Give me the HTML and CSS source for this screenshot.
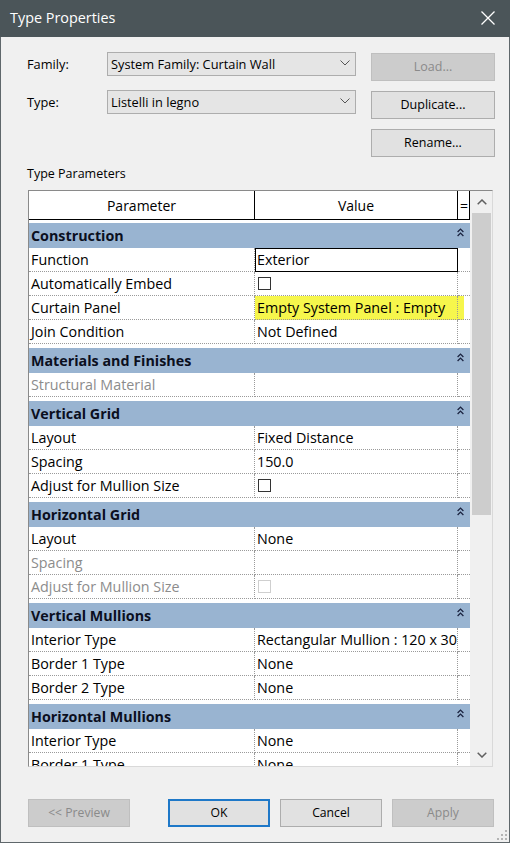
FILE: index.html
```html
<!DOCTYPE html>
<html>
<head>
<meta charset="utf-8">
<title>Type Properties</title>
<link rel="stylesheet" href="styles.css">
</head>
<body>
<div class="window">
  <div class="titlebar">
    <span class="title">Type Properties</span>
    <svg class="close" width="14" height="14" viewBox="0 0 14 14"><path d="M0.5 0.5 L13.5 13.5 M13.5 0.5 L0.5 13.5" stroke="#ffffff" stroke-width="1.3" fill="none"/></svg>
  </div>
  <div class="content">
    <div class="top">
      <div class="fields">
        <div class="field">
          <span class="label">Family:</span>
          <div class="combo"><span>System Family: Curtain Wall</span><svg width="10" height="6" viewBox="0 0 10 6"><path d="M0.5 0.5 L5 5 L9.5 0.5" stroke="#555" stroke-width="1" fill="none"/></svg></div>
        </div>
        <div class="field">
          <span class="label">Type:</span>
          <div class="combo"><span>Listelli in legno</span><svg width="10" height="6" viewBox="0 0 10 6"><path d="M0.5 0.5 L5 5 L9.5 0.5" stroke="#555" stroke-width="1" fill="none"/></svg></div>
        </div>
      </div>
      <div class="side-buttons">
        <button class="btn disabled">Load...</button>
        <button class="btn">Duplicate...</button>
        <button class="btn">Rename...</button>
      </div>
    </div>
    <div class="section-label">Type Parameters</div>
    <div class="grid">
      <div class="table">
        <div class="thead">
          <div class="th p">Parameter</div>
          <div class="th v">Value</div>
          <div class="th e">=</div>
        </div>

        <div class="group first">
          <div class="band"><span>Construction</span><svg width="7" height="9" viewBox="0 0 7 9"><path d="M0.6 4 L3.5 1.1 L6.4 4 M0.6 8 L3.5 5.1 L6.4 8" stroke="#1b2340" stroke-width="1.3" fill="none"/></svg></div>
          <div class="row"><div class="cell p">Function</div><div class="cell v edit">Exterior</div><div class="cell e"></div></div>
          <div class="row"><div class="cell p">Automatically Embed</div><div class="cell v"><span class="check"></span></div><div class="cell e"></div></div>
          <div class="row hl"><div class="cell p">Curtain Panel</div><div class="cell v">Empty System Panel : Empty</div><div class="cell e"></div></div>
          <div class="row"><div class="cell p">Join Condition</div><div class="cell v">Not Defined</div><div class="cell e"></div></div>
        </div>

        <div class="group">
          <div class="band"><span>Materials and Finishes</span><svg width="7" height="9" viewBox="0 0 7 9"><path d="M0.6 4 L3.5 1.1 L6.4 4 M0.6 8 L3.5 5.1 L6.4 8" stroke="#1b2340" stroke-width="1.3" fill="none"/></svg></div>
          <div class="row"><div class="cell p muted">Structural Material</div><div class="cell v"></div><div class="cell e"></div></div>
        </div>

        <div class="group">
          <div class="band"><span>Vertical Grid</span><svg width="7" height="9" viewBox="0 0 7 9"><path d="M0.6 4 L3.5 1.1 L6.4 4 M0.6 8 L3.5 5.1 L6.4 8" stroke="#1b2340" stroke-width="1.3" fill="none"/></svg></div>
          <div class="row"><div class="cell p">Layout</div><div class="cell v">Fixed Distance</div><div class="cell e"></div></div>
          <div class="row"><div class="cell p">Spacing</div><div class="cell v">150.0</div><div class="cell e"></div></div>
          <div class="row"><div class="cell p">Adjust for Mullion Size</div><div class="cell v"><span class="check"></span></div><div class="cell e"></div></div>
        </div>

        <div class="group">
          <div class="band"><span>Horizontal Grid</span><svg width="7" height="9" viewBox="0 0 7 9"><path d="M0.6 4 L3.5 1.1 L6.4 4 M0.6 8 L3.5 5.1 L6.4 8" stroke="#1b2340" stroke-width="1.3" fill="none"/></svg></div>
          <div class="row"><div class="cell p">Layout</div><div class="cell v">None</div><div class="cell e"></div></div>
          <div class="row"><div class="cell p muted">Spacing</div><div class="cell v"></div><div class="cell e"></div></div>
          <div class="row"><div class="cell p muted">Adjust for Mullion Size</div><div class="cell v"><span class="check off"></span></div><div class="cell e"></div></div>
        </div>

        <div class="group">
          <div class="band"><span>Vertical Mullions</span><svg width="7" height="9" viewBox="0 0 7 9"><path d="M0.6 4 L3.5 1.1 L6.4 4 M0.6 8 L3.5 5.1 L6.4 8" stroke="#1b2340" stroke-width="1.3" fill="none"/></svg></div>
          <div class="row"><div class="cell p">Interior Type</div><div class="cell v">Rectangular Mullion : 120 x 30</div><div class="cell e"></div></div>
          <div class="row"><div class="cell p">Border 1 Type</div><div class="cell v">None</div><div class="cell e"></div></div>
          <div class="row"><div class="cell p">Border 2 Type</div><div class="cell v">None</div><div class="cell e"></div></div>
        </div>

        <div class="group">
          <div class="band"><span>Horizontal Mullions</span><svg width="7" height="9" viewBox="0 0 7 9"><path d="M0.6 4 L3.5 1.1 L6.4 4 M0.6 8 L3.5 5.1 L6.4 8" stroke="#1b2340" stroke-width="1.3" fill="none"/></svg></div>
          <div class="row"><div class="cell p">Interior Type</div><div class="cell v">None</div><div class="cell e"></div></div>
          <div class="row"><div class="cell p">Border 1 Type</div><div class="cell v">None</div><div class="cell e"></div></div>
        </div>
      </div>
      <div class="scrollbar">
        <div class="arrow"><svg width="10" height="6" viewBox="0 0 10 6"><path d="M0.7 5.3 L5 1 L9.3 5.3" stroke="#606060" stroke-width="1.5" fill="none"/></svg></div>
        <div class="track"><div class="thumb"></div></div>
        <div class="arrow"><svg width="10" height="6" viewBox="0 0 10 6"><path d="M0.7 0.7 L5 5 L9.3 0.7" stroke="#606060" stroke-width="1.5" fill="none"/></svg></div>
      </div>
    </div>
    <div class="footer">
      <button class="btn wide disabled">&lt;&lt; Preview</button>
      <button class="btn wide default">OK</button>
      <button class="btn wide">Cancel</button>
      <button class="btn wide disabled">Apply</button>
    </div>
  </div>
  <svg class="grip" width="10" height="10" viewBox="0 0 10 10"><g fill="#b4b4b4"><rect x="8" y="0" width="2" height="2"/><rect x="4" y="4" width="2" height="2"/><rect x="8" y="4" width="2" height="2"/><rect x="0" y="8" width="2" height="2"/><rect x="4" y="8" width="2" height="2"/><rect x="8" y="8" width="2" height="2"/></g></svg>
</div>
</body>
</html>
```

FILE: styles.css
```css
* { box-sizing: border-box; }
html, body { margin: 0; padding: 0; }
body {
  width: 510px;
  height: 843px;
  background: #f0f0f0;
  font-family: "Segoe UI", "Open Sans", "Noto Sans", "Liberation Sans", sans-serif;
  font-size: 13px;
  color: #000;
  overflow: hidden;
}
.window {
  position: relative;
  width: 510px;
  height: 843px;
  background: #f0f0f0;
  border: 1px solid #5f676b;
  border-top: none;
  display: flex;
  flex-direction: column;
}
.titlebar {
  height: 37px;
  margin: 0 -1px;
  background: #4b5559;
  display: flex;
  align-items: center;
  justify-content: space-between;
  padding: 0 15px 0 10px;
}
.title {
  color: #ffffff;
  font-size: 14.4px;
  line-height: 20px;
  margin-top: -1px;
}
.close { display: block; margin-top: -1px; }
.content {
  padding: 16px 14px 0 26px;
  display: flex;
  flex-direction: column;
}
.top {
  display: flex;
  justify-content: space-between;
}
.fields {
  width: 329px;
  display: flex;
  flex-direction: column;
  margin-top: -1px;
}
.field {
  height: 38px;
  display: flex;
  align-items: flex-start;
  font-size: 12.8px;
}
.label {
  width: 80px;
  line-height: 24px;
}
.combo {
  width: 249px;
  height: 24px;
  background: #e5e5e5;
  border: 1px solid #adadad;
  display: flex;
  align-items: center;
  justify-content: space-between;
  padding: 0 5px 0 3px;
  line-height: 20px;
}
.combo svg { display: block; margin-top: -2px; }
.side-buttons {
  width: 124px;
  display: flex;
  flex-direction: column;
  gap: 10px;
}
.btn {
  height: 28px;
  width: 124px;
  background: #e1e1e1;
  border: 1px solid #adadad;
  font-family: inherit;
  font-size: 12.5px;
  color: #000;
  padding: 0;
  margin: 0;
  line-height: 24px;
}
.btn.disabled {
  background: #cccccc;
  border-color: #bfbfbf;
  color: #8a8a8a;
}
.btn.default {
  border: 2px solid #1e78c8;
}
.btn.wide { width: 102px; font-size: 12.2px; }
.section-label {
  margin-top: 7px;
  height: 20px;
  line-height: 20px;
  font-size: 12.5px;
}
.grid {
  margin-top: 6px;
  margin-left: 1px;
  width: 465px;
  height: 577px;
  border: 1px solid #8a8a8a;
  border-right-color: #d9d9d9;
  border-bottom-color: #d9d9d9;
  display: flex;
  background: #ffffff;
  font-size: 14.3px;
}
.table {
  width: 441px;
  overflow: hidden;
  background: #ffffff;
}
.thead {
  display: grid;
  grid-template-columns: 226px 203px 12px;
  height: 29px;
  border-bottom: 1px solid #000;
  font-size: 14px;
}
.th {
  text-align: center;
  line-height: 28px;
  padding-top: 1px;
  border-right: 1px solid #000;
}
.th.e { text-align: left; padding-left: 2px; }
.group { margin-top: 4px; }
.group.first { margin-top: 3px; }
.band {
  height: 25px;
  background: #99b4d1;
  display: flex;
  justify-content: space-between;
  padding: 0 6px 0 2px;
  font-weight: 700;
  line-height: 25px;
  color: #0b0f1e;
}
.band svg { display: block; margin-top: 5px; }
.row {
  display: grid;
  grid-template-columns: 226px 203px 12px;
  height: 24px;
}
.cell {
  border-bottom: 1px dotted #9a9a9a;
  line-height: 23px;
  padding-left: 2px;
  white-space: nowrap;
  overflow: hidden;
}
.cell.p, .cell.v { border-right: 1px dotted #9a9a9a; }
.cell.muted { color: #8c8c8c; }
.cell.edit { position: relative; overflow: visible; }
.cell.edit::after {
  content: "";
  position: absolute;
  top: 0;
  left: 0;
  right: -1px;
  bottom: -1px;
  border: 1px solid #000;
}
.row.hl .cell.v { background: #f6f64c; }
.row.hl .cell.e { background: linear-gradient(to right, #f6f64c 0 6px, transparent 6px); }
.check {
  display: inline-block;
  width: 13px;
  height: 13px;
  border: 1px solid #333;
  background: #fff;
  vertical-align: middle;
  margin: -3px 0 0 1px;
}
.check.off { border-color: #cfcfcf; }
.scrollbar {
  width: 22px;
  background: #f0f0f0;
  display: flex;
  flex-direction: column;
}
.arrow {
  height: 22px;
  display: flex;
  align-items: center;
  justify-content: center;
  padding-left: 2px;
}
.track {
  flex: 1;
  padding: 0 1px 0 2px;
}
.thumb {
  height: 302px;
  background: #cdcdcd;
}
.footer {
  margin-top: 32px;
  display: flex;
  gap: 10px;
  padding-left: 1px;
}
.footer .btn:first-child { margin-right: 28px; }
.grip {
  position: absolute;
  right: 2px;
  bottom: 2px;
}
```
